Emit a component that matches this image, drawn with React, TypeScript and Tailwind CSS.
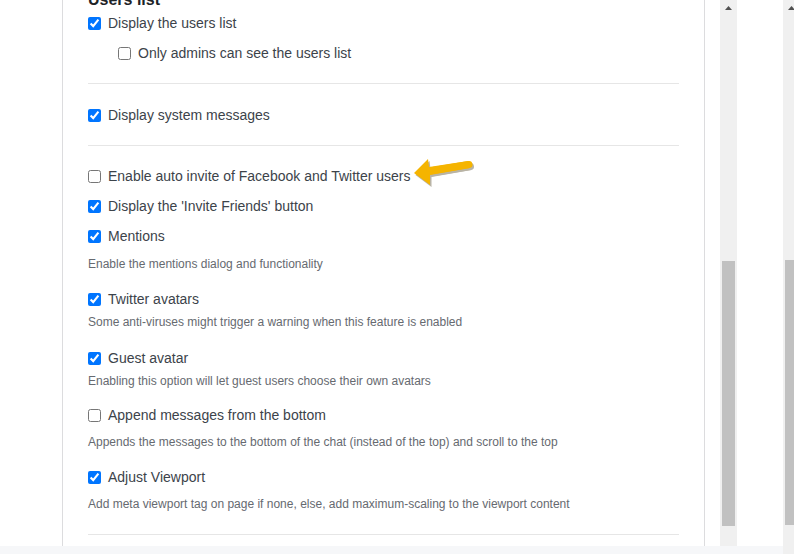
import React from "react";

type Item =
  | { kind: "check"; label: string; checked: boolean; cls: string; arrow?: boolean; indent?: boolean }
  | { kind: "desc"; text: string; cls: string }
  | { kind: "hr"; cls: string };

const items: Item[] = [
  { kind: "check", label: "Display the users list", checked: true, cls: "h-[26px]" },
  { kind: "check", label: "Only admins can see the users list", checked: false, cls: "h-[34px]", indent: true },
  { kind: "hr", cls: "mt-[13px]" },
  { kind: "check", label: "Display system messages", checked: true, cls: "mt-[16px] h-[30px]" },
  { kind: "hr", cls: "mt-[15px]" },
  { kind: "check", label: "Enable auto invite of Facebook and Twitter users", checked: false, cls: "mt-[15px] h-[30px]", arrow: true },
  { kind: "check", label: "Display the 'Invite Friends' button", checked: true, cls: "h-[30px]" },
  { kind: "check", label: "Mentions", checked: true, cls: "h-[30px]" },
  { kind: "desc", text: "Enable the mentions dialog and functionality", cls: "mt-[5px]" },
  { kind: "check", label: "Twitter avatars", checked: true, cls: "mt-[12px] h-[30px]" },
  { kind: "desc", text: "Some anti-viruses might trigger a warning when this feature is enabled", cls: "mt-0" },
  { kind: "check", label: "Guest avatar", checked: true, cls: "mt-[13px] h-[30px]" },
  { kind: "desc", text: "Enabling this option will let guest users choose their own avatars", cls: "mt-0" },
  { kind: "check", label: "Append messages from the bottom", checked: false, cls: "mt-[11px] h-[30px]" },
  { kind: "desc", text: "Appends the messages to the bottom of the chat (instead of the top) and scroll to the top", cls: "mt-[4px]" },
  { kind: "check", label: "Adjust Viewport", checked: true, cls: "mt-[12px] h-[30px]" },
  { kind: "desc", text: "Add meta viewport tag on page if none, else, add maximum-scaling to the viewport content", cls: "mt-[4px]" },
  { kind: "hr", cls: "mt-[22px]" },
];

const ArrowShape = ({ fill }: { fill: string }) => (
  <>
    <path d="M1 17 L15 3 L16 11 L55 5 L57 12 L17 19 L17 29 Z" fill={fill} />
    <line x1="17" y1="15" x2="56" y2="8.5" stroke={fill} strokeWidth="7" strokeLinecap="round" />
  </>
);

const Arrow = () => (
  <svg width="64" height="34" viewBox="0 0 64 34" className="ml-[3px] -mt-[6px]">
    <g transform="translate(1.5,2)" opacity="0.35">
      <ArrowShape fill="#3a2a00" />
    </g>
    <ArrowShape fill="#f5b400" />
  </svg>
);

const UpArrow = () => (
  <svg width="7" height="4" viewBox="0 0 7 4">
    <path d="M0 4 L3.5 0 L7 4 Z" fill="#505050" />
  </svg>
);

export default function App() {
  return (
    <div className="flex h-[554px] w-[794px] overflow-hidden bg-white text-[#3c434a]" style={{ fontFamily: '"Liberation Sans", Arial, sans-serif' }}>
      <div className="flex w-[783px] flex-col">
        <div className="flex h-[546px]">
          <div className="w-[62px] shrink-0" />
          <div className="w-[643px] shrink-0 overflow-hidden border-x border-[#dcdcde] px-[25px]">
            <div className="-mt-[10px] h-[20px] text-[16px] font-bold leading-[20px] text-[#1d2327]">Users list</div>
            {items.map((it, i) => {
              if (it.kind === "hr") return <div key={i} className={`border-t border-[#e6e6e6] ${it.cls}`} />;
              if (it.kind === "desc")
                return (
                  <div key={i} className={`h-[16px] text-[12px] leading-[16px] text-[#666a70] ${it.cls}`}>
                    {it.text}
                  </div>
                );
              return (
                <label key={i} className={`flex items-center text-[14px] ${it.indent ? "pl-[30px]" : ""} ${it.cls}`}>
                  <input type="checkbox" defaultChecked={it.checked} className="m-0 h-[13px] w-[13px]" />
                  <span className="ml-[7px]">{it.label}</span>
                  {it.arrow && <Arrow />}
                </label>
              );
            })}
          </div>
          <div className="w-[15px] shrink-0" />
          <div className="flex w-[17px] shrink-0 flex-col items-center bg-[#f0f0f0]">
            <div className="mt-[6px]">
              <UpArrow />
            </div>
            <div className="mt-[251px] h-[265px] w-[13px] bg-[#c1c1c1]" />
          </div>
          <div className="flex-1" />
        </div>
        <div className="h-[8px] bg-[#f6f7f9]" />
      </div>
      <div className="flex w-[11px] shrink-0 flex-col bg-[#f0f0f0]">
        <div className="ml-[5px] mt-[6px]">
          <UpArrow />
        </div>
        <div className="ml-[2px] mt-[250px] h-[265px] w-[9px] bg-[#c1c1c1]" />
      </div>
    </div>
  );
}
